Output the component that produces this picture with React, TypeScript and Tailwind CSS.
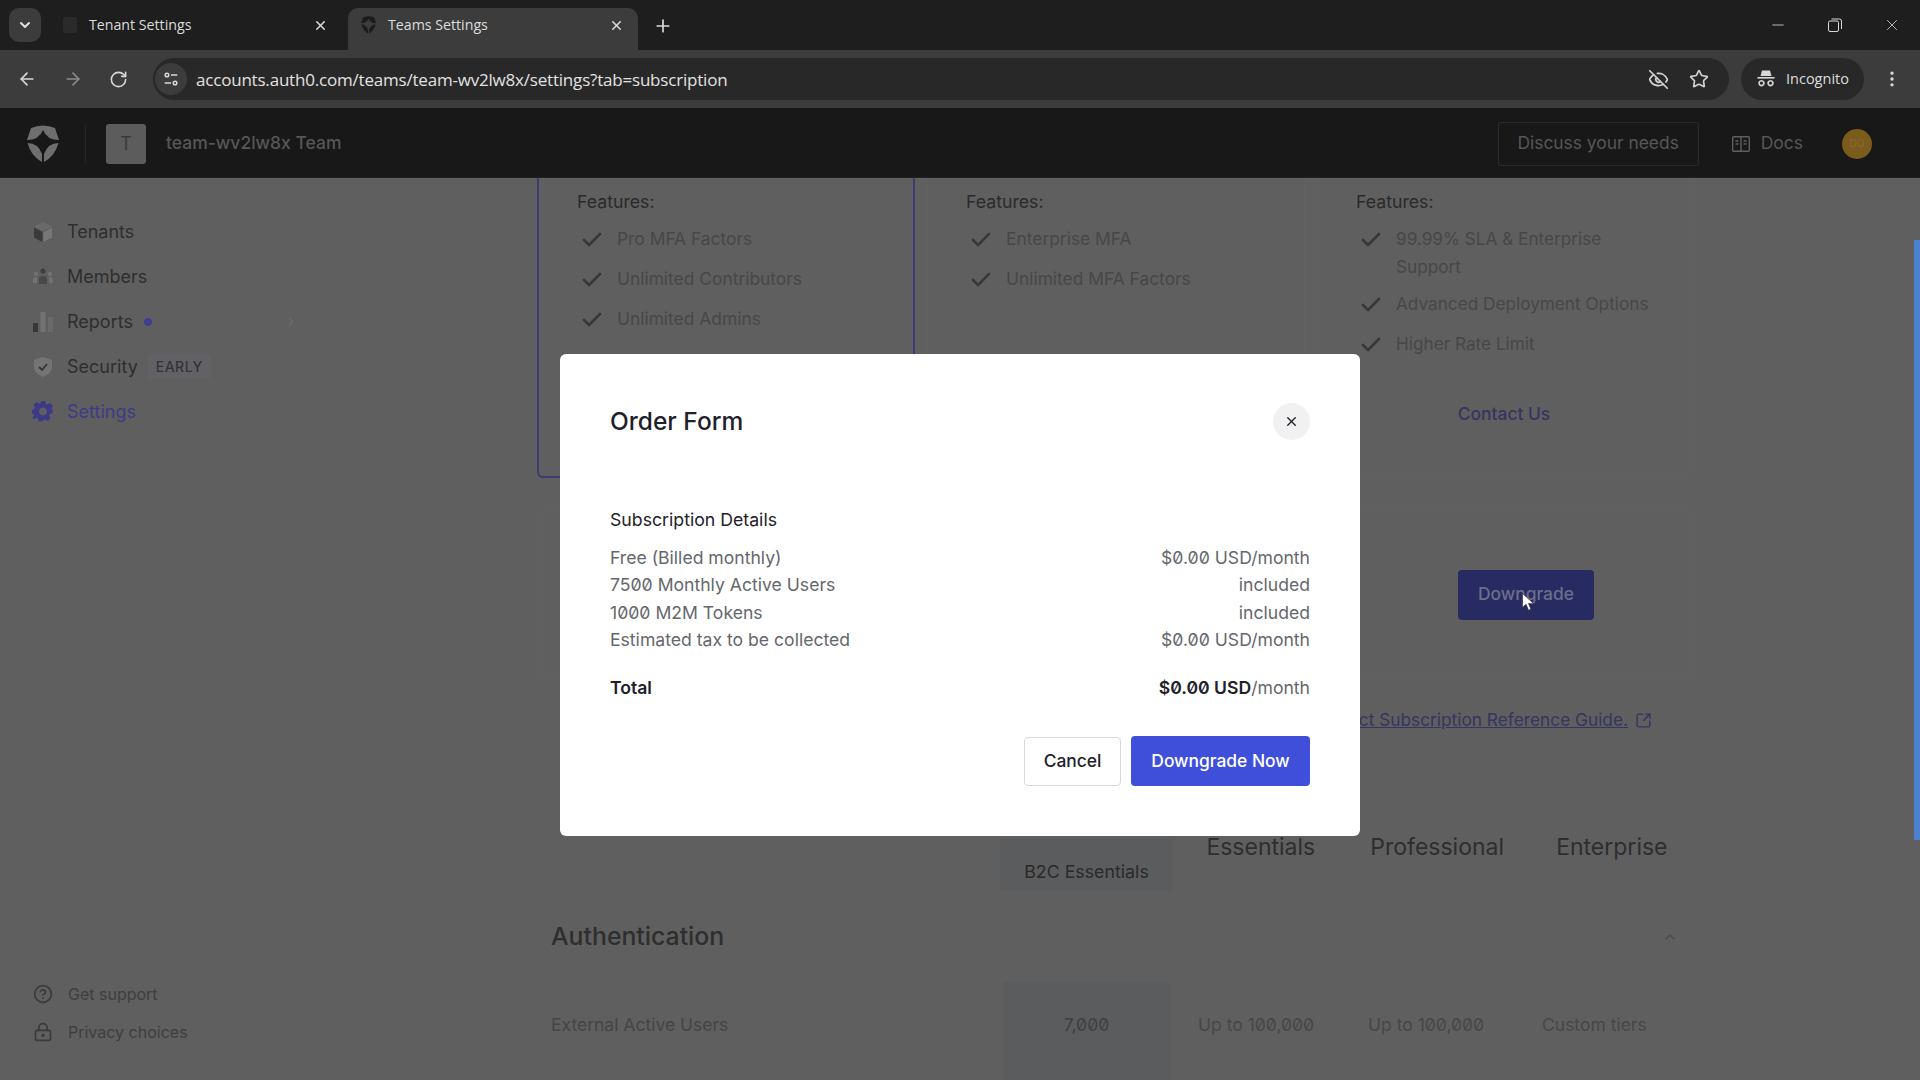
import React from 'react';
import { ArrowLeft, ArrowRight, RotateCw, EyeOff, Star, EllipsisVertical, Plus, X, ChevronDown, ChevronUp, Minus, Check, CircleHelp, LockKeyhole, SquareArrowOutUpRight } from 'lucide-react';

const Shield = ({ className }: { className?: string }) => (
  <svg viewBox="0 0 32 38" className={className} fill="currentColor">
    <path d="M4 3Q16-2 28 3L32 15Q20 15 16 5 12 15 0 15Z" />
    <path d="M.5 18Q11 18 15 29V37Q4 31 .5 18Z" />
    <path d="M31.5 18Q21 18 17 29V37Q28 31 31.5 18Z" />
  </svg>
);

const Tune = () => (
  <svg viewBox="0 0 20 20" className="w-[18px] h-[18px]" fill="none" stroke="#d8d8d8" strokeWidth="1.7">
    <circle cx="5.5" cy="5.5" r="2" />
    <path d="M10 5.5h7M3 14.5h7" />
    <circle cx="14.5" cy="14.5" r="2" />
  </svg>
);

const Restore = () => (
  <svg viewBox="0 0 14 14" className="w-[14px] h-[14px]" fill="none" stroke="#d8d8d8" strokeWidth="1">
    <rect x=".5" y="3" width="10" height="10.5" rx="1.5" />
    <path d="M3.5 1h8a2 2 0 0 1 2 2v8" />
  </svg>
);

const IncognitoIcon = () => (
  <svg viewBox="0 0 20 20" className="w-[20px] h-[20px]" fill="#d8d8d8">
    <path d="M6 1.5h8l1.5 5.5h-11z" />
    <rect x="1.5" y="8" width="17" height="1.6" />
    <path d="M5.5 11a3.2 3.2 0 1 0 .01 0zm0 1.6a1.6 1.6 0 1 1-.01 0zM14.5 11a3.2 3.2 0 1 0 .01 0zm0 1.6a1.6 1.6 0 1 1-.01 0z" fillRule="evenodd" />
  </svg>
);

const DocsIcon = () => (
  <svg viewBox="0 0 18 16" className="w-[18px] h-[16px]" fill="none" stroke="#5f5f5f" strokeWidth="1.4">
    <rect x=".7" y=".7" width="16.6" height="14.6" rx="1" />
    <path d="M9 1v14M3.5 5h3M3.5 8h3M11.5 5h3M11.5 8h3" />
  </svg>
);

const CubeIcon = () => (
  <svg viewBox="0 0 22 22" className="w-[22px] h-[22px]">
    <path d="M11 1l9 4.5-9 4.5-9-4.5z" fill="#6a6a6a" />
    <path d="M2 6.5l8.5 4.5V21L2 16.5z" fill="#3a3a3a" />
    <path d="M20 6.5L11.5 11V21l8.5-4.5z" fill="#767676" />
  </svg>
);

const MembersIcon = () => (
  <svg viewBox="0 0 22 22" className="w-[22px] h-[22px]">
    <circle cx="11" cy="5" r="2.6" fill="#3f3f3f" />
    <circle cx="4" cy="8" r="2.2" fill="#727272" />
    <circle cx="18" cy="8" r="2.2" fill="#727272" />
    <path d="M7 18v-5q0-3 4-3t4 3v5z" fill="#484848" />
    <path d="M1 17v-3q0-3 4-3v6zM21 17v-3q0-3-4-3v6z" fill="#727272" />
  </svg>
);

const BarsIcon = () => (
  <svg viewBox="0 0 22 22" className="w-[22px] h-[22px]">
    <rect x="1" y="12" width="5" height="9" fill="#383838" />
    <rect x="8.5" y="1" width="5" height="20" fill="#727272" />
    <rect x="16" y="6" width="5" height="15" fill="#6a6a6a" />
  </svg>
);

const SecurityIcon = () => (
  <svg viewBox="0 0 22 22" className="w-[22px] h-[22px]">
    <path d="M11 1l9 3v7q0 6-9 10-9-4-9-10V4z" fill="#747474" />
    <path d="M7 11l3 3 5-6" fill="none" stroke="#333" strokeWidth="1.8" />
  </svg>
);

const GearIcon = () => (
  <svg viewBox="0 0 24 24" className="w-[22px] h-[22px]" fill="#3a3a86">
    <path fillRule="evenodd" d="M9.5 1h5l.7 3.2 1.9.8 2.8-1.8 3.5 3.5-1.8 2.8.8 1.9L23 11v4l-3.2.7-.8 1.9 1.8 2.8-3.5 3.5-2.8-1.8-1.9.8-.6 1.1h-5l-.7-3.2-1.9-.8-2.8 1.8L.1 20.4l1.8-2.8-.8-1.9L-1 15v-4l3.1-.6.8-1.9L1.1 5.7l3.5-3.5 2.8 1.8 1.9-.8zM12 8.5a4.5 4.5 0 1 0 .01 0z" transform="translate(0.5 -1) scale(.96)" />
  </svg>
);

const navItems = [
  { label: 'Tenants', icon: <CubeIcon /> },
  { label: 'Members', icon: <MembersIcon /> },
  { label: 'Reports', icon: <BarsIcon />, dot: true, arrow: true },
  { label: 'Security', icon: <SecurityIcon />, badge: 'EARLY' },
  { label: 'Settings', icon: <GearIcon />, active: true },
];

const plans = [
  { items: [['Pro MFA Factors'], ['Unlimited Contributors'], ['Unlimited Admins']], selected: true },
  { items: [['Enterprise MFA'], ['Unlimited MFA Factors']] },
  { items: [['99.99% SLA & Enterprise', 'Support'], ['Advanced Deployment Options'], ['Higher Rate Limit']], contact: true },
];

const rows = [
  ['Free (Billed monthly)', '$0.00 USD/month'],
  ['7500 Monthly Active Users', 'included'],
  ['1000 M2M Tokens', 'included'],
  ['Estimated tax to be collected', '$0.00 USD/month'],
];

const Tab = ({ title, active, icon }: { title: string; active?: boolean; icon: React.ReactNode }) => (
  <div className={`h-[42px] flex items-center rounded-t-[10px] pl-[13px] pb-[8px] ${active ? 'w-[290px] pr-[14px] bg-[#3c3c3c]' : 'w-[299px] pr-[20px]'}`}>
    <span className="w-[15px] flex justify-center">{icon}</span>
    <span className="ml-[12px] flex-1 text-[14.2px] text-[#dcdcdc] font-['Open_Sans',sans-serif] leading-none">{title}</span>
    <X size={15} strokeWidth={2.5} className="text-[#d8d8d8]" />
  </div>
);

const Nav = ({ item }: { item: (typeof navItems)[number] }) => (
  <div className="h-[45px] flex items-center pl-[32px] pr-[36px]">
    <span className="w-[22px] flex justify-center">{item.icon}</span>
    <span className={`ml-[13px] text-[18px] ${item.active ? 'text-[#3c3c85]' : 'text-[#2e2e2e]'}`}>{item.label}</span>
    {item.dot && <span className="ml-[11px] w-[8px] h-[8px] rounded-full bg-[#3f3f8f]" />}
    {item.badge && <span className="ml-[10px] px-[8px] py-[2px] rounded-[3px] bg-[#626266] text-[14px] font-medium tracking-[0.5px] text-[#333339]">{item.badge}</span>}
    {item.arrow && <span className="ml-auto text-[#6c6c6c] text-[15px]">›</span>}
  </div>
);

export default function App() {
  return (
    <div className="w-[1920px] h-[1080px] flex flex-col overflow-hidden bg-[#5f5f5f] font-['Inter',sans-serif]">
      <div className="h-[50px] shrink-0 bg-[#1e1e1e] flex items-end pl-[9px] relative">
        <div className="w-[32px] h-[34px] mb-[8px] rounded-[10px] bg-[#3c3c3c] flex items-center justify-center">
          <ChevronDown size={16} strokeWidth={3} className="text-[#e0e0e0]" />
        </div>
        <div className="ml-[8px]">
          <Tab title="Tenant Settings" icon={<span className="block w-[14px] h-[16px] rounded-[2px] bg-[#2a2a2a]" />} />
        </div>
        <Tab title="Teams Settings" active icon={<Shield className="w-[15px] h-[18px] text-[#1c1c1c]" />} />
        <Plus size={20} strokeWidth={2} className="ml-[15px] mb-[14px] text-[#dcdcdc]" />
        <div className="ml-auto h-full flex items-center gap-[41px] pr-[19px]">
          <Minus size={18} strokeWidth={1.1} className="text-[#d8d8d8]" />
          <Restore />
          <X size={18} strokeWidth={1.1} className="text-[#d8d8d8]" />
        </div>
      </div>

      <div className="h-[58px] shrink-0 bg-[#3c3c3c] flex items-center">
        <div className="w-[153px] flex items-center pl-[17px] gap-[26px]">
          <ArrowLeft size={20} className="text-[#d8d8d8]" />
          <ArrowRight size={20} className="text-[#8a8a8a]" />
          <RotateCw size={19} className="text-[#d8d8d8]" />
        </div>
        <div className="w-[1576px] h-[42px] rounded-full bg-[#282828] flex items-center pl-[2px] pr-[20px]">
          <span className="w-[32px] h-[32px] rounded-full bg-[#3c3c3c] flex items-center justify-center"><Tune /></span>
          <span className="ml-[9px] pt-[1px] text-[17px] text-[#e2e2e2] font-['Open_Sans',sans-serif] tracking-[-0.2px]">accounts.auth0.com/teams/team-wv2lw8x/settings?tab=subscription</span>
          <EyeOff size={21} className="ml-auto text-[#d0d0d0]" />
          <Star size={20} strokeWidth={2} className="ml-[20px] text-[#d0d0d0]" />
        </div>
        <div className="ml-[12px] w-[123px] h-[42px] rounded-full bg-[#282828] flex items-center pl-[15px]">
          <IncognitoIcon />
          <span className="ml-[10px] text-[14.5px] text-[#dedede] font-['Open_Sans',sans-serif]">Incognito</span>
        </div>
        <EllipsisVertical size={20} className="ml-[18px] text-[#d8d8d8]" />
      </div>

      <div className="flex-1 flex flex-col relative min-h-0">
        <header className="h-[70px] shrink-0 bg-[#181818] flex items-center pt-[2px] border-b border-[#222]">
          <Shield className="ml-[27px] w-[32px] h-[38px] text-[#6e6e6e]" />
          <span className="ml-[26px] w-px h-[38px] bg-[#262626]" />
          <span className="ml-[20px] w-[40px] h-[40px] rounded-[3px] bg-[#5c5c5c] flex items-center justify-center text-[18px] text-[#3a3a3a]">T</span>
          <span className="ml-[20px] text-[17.5px] font-medium text-[#565656]">team-wv2lw8x Team</span>
          <div className="ml-auto w-[201px] h-[44px] rounded-[3px] border border-[#2b2b2b] flex items-center justify-center text-[17.4px] text-[#565656]">Discuss your needs</div>
          <span className="ml-[33px]"><DocsIcon /></span>
          <span className="ml-[11px] text-[17.5px] text-[#565656]">Docs</span>
          <span className="ml-[39px] mr-[48px] w-[30px] h-[30px] rounded-full bg-[#7a5c1c] flex items-center justify-center text-[10px] text-[#8a6c2c]">DO</span>
        </header>

        <div className="flex-1 flex min-h-0">
          <aside className="w-[330px] shrink-0 flex flex-col pt-[31px] pb-[38px]">
            {navItems.map((item) => <Nav key={item.label} item={item} />)}
            <div className="mt-auto flex flex-col gap-[18px] pl-[33px] text-[16px] text-[#3e3e3e]">
              <div className="h-[20px] flex items-center gap-[15px]"><CircleHelp size={20} className="text-[#3a3a3a]" />Get support</div>
              <div className="h-[20px] flex items-center gap-[15px]"><LockKeyhole size={20} className="text-[#3a3a3a]" />Privacy choices</div>
            </div>
          </aside>

          <main className="flex-1 min-w-0 overflow-hidden pl-[207px] pr-[219px]">
            <div className="w-[1158px]">
              <div className="grid grid-cols-3 gap-[12px] h-[300px]">
                {plans.map((plan, i) => (
                  <div key={i} className={`pl-[38px] pr-[20px] flex flex-col ${plan.selected ? 'border-x-2 border-b-2 rounded-b-[6px] border-[#3b3b78]' : 'border-x border-b border-[#616161] rounded-b-[6px]'}`}>
                    <div className="pt-[10px] h-[34px] text-[17.7px] leading-[27px] text-[#2a2a2a]">Features:</div>
                    <div className="mt-[13px] flex flex-col gap-[12.5px]">
                      {plan.items.map((lines) => (
                        <div key={lines[0]} className={`flex leading-[27.5px] text-[#474747] ${plan.contact ? 'text-[17.2px]' : 'text-[17.4px]'} ${lines.length > 1 ? '-mb-[3px]' : ''}`}>
                          <Check size={24} strokeWidth={2.6} className="mt-[3px] ml-[3px] mr-[13px] text-[#383838] shrink-0" />
                          <span>{lines.map((l) => <span key={l} className="block">{l}</span>)}</span>
                        </div>
                      ))}
                    </div>
                    {plan.contact && <div className="mt-[44px] text-center pr-[22px] text-[17.4px] font-medium text-[#35355f]">Contact Us</div>}
                  </div>
                ))}
              </div>

              <div className="mt-[31px] h-[171px] border border-[#616161] rounded-[4px] flex items-center justify-end pr-[100px]">
                <div className="relative w-[136px] h-[50px] rounded-[4px] bg-[#272b62] flex items-center justify-center text-[17.4px] font-medium text-[#6c6e8c]">
                  Downgrade
                  <svg viewBox="0 0 12 18" className="absolute left-[64px] top-[23px] w-[12px] h-[18px]" fill="#fff" stroke="#222" strokeWidth=".6">
                    <path d="M.5.5v14l3.6-3.3 2.4 6 2.4-1-2.4-5.8h5z" />
                  </svg>
                </div>
              </div>

              <div className="mt-[27px] h-[26px] flex items-center justify-end pr-[43px] text-[17.3px] text-[#35355f]">
                <span className="underline">For full details, see the Auth0 Product Subscription Reference Guide.</span>
                <SquareArrowOutUpRight size={17} className="ml-[7px]" />
              </div>

              <div className="mt-[98px] h-[60px] flex text-[23px] text-[#2e2e2e]">
                <div className="w-[463px]" />
                <div className="w-[174px] mt-[8px] bg-[#5b5c5e] flex items-end justify-center pb-[6px] text-[17.8px] leading-[27px] text-[#2a2a2a]">B2C Essentials</div>
                <div className="w-[172px] pl-[33px] pt-[1px] leading-[30px]">Essentials</div>
                <div className="w-[175px] pl-[25px] pt-[1px] leading-[30px]">Professional</div>
                <div className="w-[175px] pl-[36px] pt-[1px] leading-[30px]">Enterprise</div>
              </div>

              <div className="h-[91px] flex items-center justify-between pl-[14px] pr-[17px] text-[24.8px] font-medium text-[#2e2e2e]">
                Authentication
                <ChevronUp size={16} className="text-[#4c4c4c]" />
              </div>

              <div className="h-[100px] flex items-start text-[17.5px] text-[#474747] [font-feature-settings:'zero']">
                <div className="w-[466px] pl-[14px] pt-[30px] text-[#454545]">External Active Users</div>
                <div className="w-[167px] h-full bg-[#5b5c5e] pt-[30px] text-center text-[#404040]">7,000</div>
                <div className="w-[175px] pl-[28px] pt-[30px]">Up to 100,000</div>
                <div className="w-[175px] pl-[23px] pt-[30px]">Up to 100,000</div>
                <div className="w-[175px] pl-[22px] pt-[30px]">Custom tiers</div>
              </div>
            </div>
          </main>

          <div className="w-[6px] shrink-0">
            <div className="mt-[62px] h-[600px] bg-[#4a80cc]" />
          </div>
        </div>

        <div className="absolute inset-0 pt-[2px] flex items-center justify-center">
          <div className="w-[800px] h-[482px] bg-white rounded-[6px] px-[50px] pt-[47px] flex flex-col">
            <div className="flex items-center justify-between">
              <h2 className="text-[24.5px] font-medium leading-[40px] text-[#1e212a]">Order Form</h2>
              <span className="w-[37px] h-[37px] rounded-full bg-[#f1f1f1] flex items-center justify-center">
                <X size={15} strokeWidth={2.2} className="text-[#1e212a]" />
              </span>
            </div>
            <div className="mt-[65px] text-[17.7px] leading-[27.5px] text-[#1e212a]">Subscription Details</div>
            <div className="mt-[10px] flex flex-col text-[17.6px] leading-[27.5px] text-[#65676e] [font-feature-settings:'zero']">
              {rows.map(([label, value]) => (
                <div key={label} className="flex justify-between">
                  <span>{label}</span>
                  <span>{value}</span>
                </div>
              ))}
            </div>
            <div className="mt-[20px] flex justify-between text-[17.6px] leading-[27.5px] text-[#65676e] [font-feature-settings:'zero']">
              <span className="font-semibold text-[#1e212a]">Total</span>
              <span><span className="font-semibold text-[#1e212a]">$0.00 USD</span>/month</span>
            </div>
            <div className="mt-[35px] flex justify-end items-center gap-[10px] text-[17.4px] font-medium">
              <div className="w-[97px] h-[49px] rounded-[4px] border border-[#d8d9de] flex items-center justify-center text-[#1e212a]">Cancel</div>
              <div className="w-[179px] h-[50px] rounded-[4px] bg-[#3f4fd9] flex items-center justify-center text-white">Downgrade Now</div>
            </div>
          </div>
        </div>
      </div>
    </div>
  );
}
